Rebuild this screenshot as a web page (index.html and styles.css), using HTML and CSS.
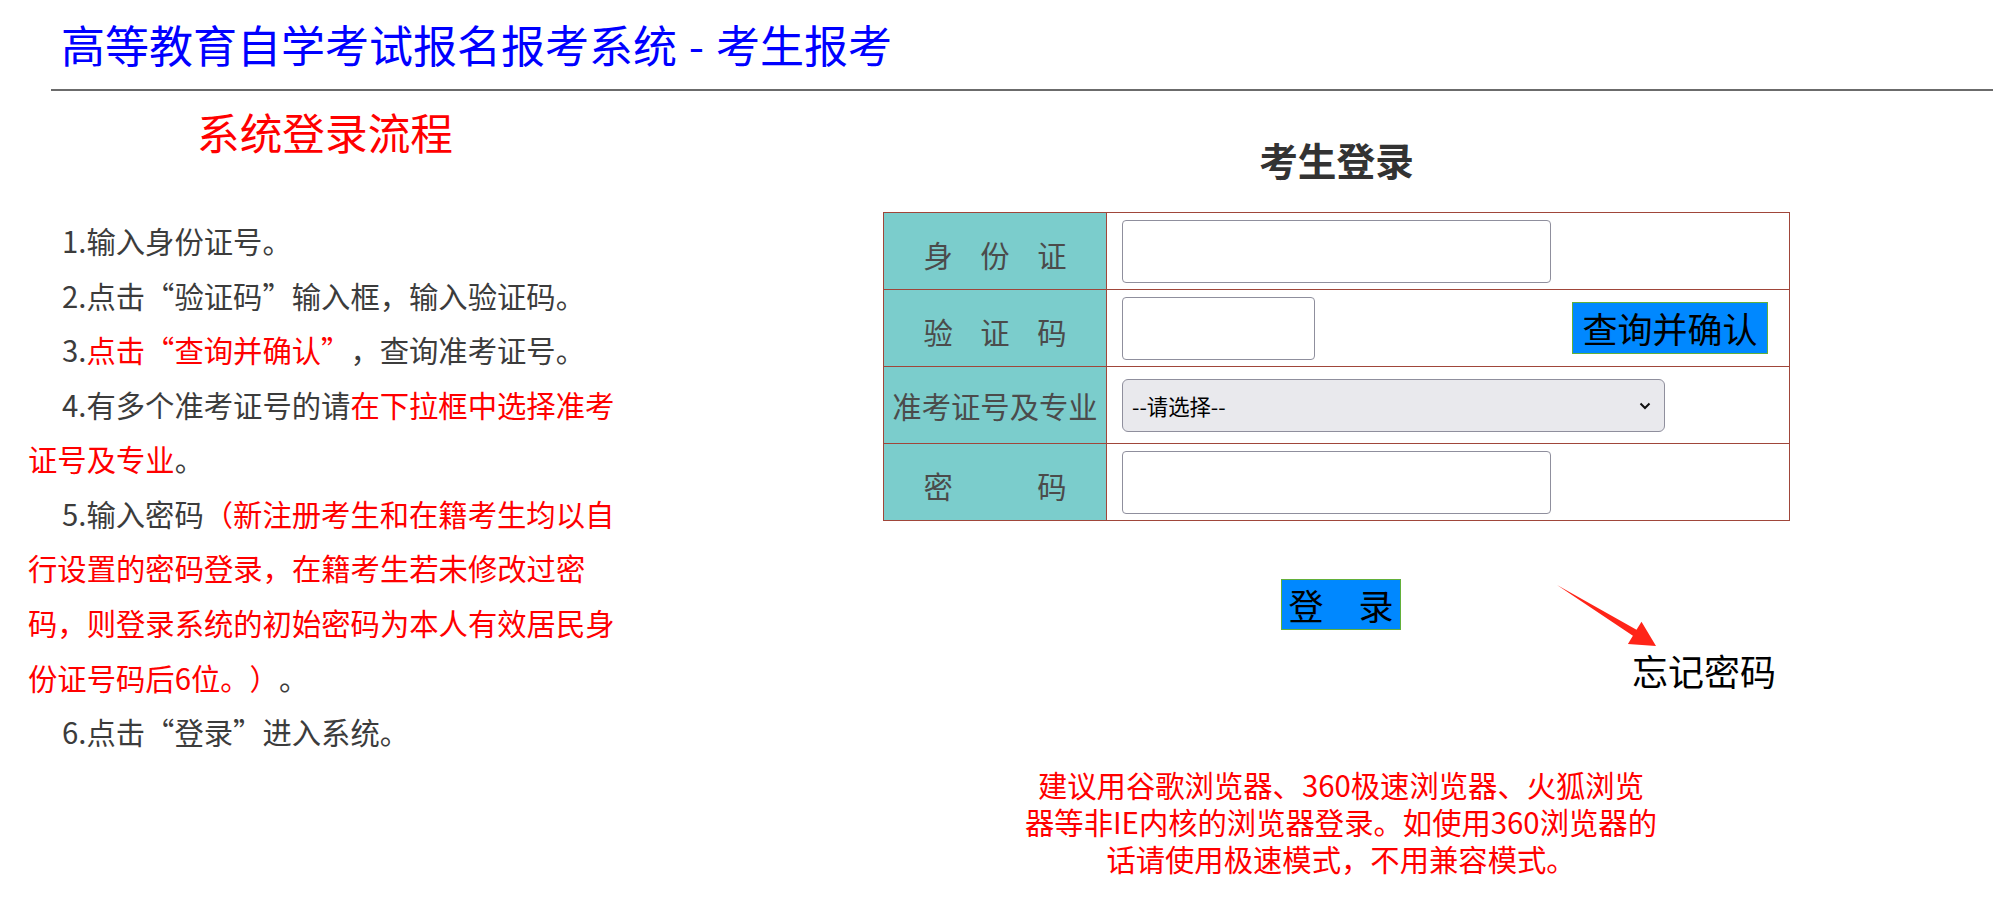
FILE: index.html
```html
<!DOCTYPE html>
<html lang="zh-CN">
<head>
<meta charset="utf-8">
<title>高等教育自学考试报名报考系统 - 考生报考</title>
<link rel="stylesheet" href="styles.css">
</head>
<body>
<header class="top">
  <h1 class="site-title">高等教育自学考试报名报考系统 - 考生报考</h1>
</header>
<hr class="rule">
<main class="layout">
  <section class="guide">
    <h2 class="guide-title">系统登录流程</h2>
    <div class="steps">
      <p>1.输入身份证号。</p>
      <p>2.点击“验证码”输入框，输入验证码。</p>
      <p>3.<span class="hl">点击“查询并确认”</span>，查询准考证号。</p>
      <p>4.有多个准考证号的请<span class="hl">在下拉框中选择准考</span><span class="hl">证号及专业</span>。</p>
      <p>5.输入密码<span class="hl">（新注册考生和在籍考生均以自</span><span class="hl">行设置的密码登录，在籍考生若未修改过密</span><span class="hl">码，则登录系统的初始密码为本人有效居民身</span><span class="hl">份证号码后6位。）</span>。</p>
      <p>6.点击“登录”进入系统。</p>
    </div>
  </section>

  <section class="login">
    <h2 class="login-title">考生登录</h2>
    <table class="login-table">
      <tr>
        <th class="label"><span class="spread"><span>身</span><span>份</span><span>证</span></span></th>
        <td class="field"><input class="text-input wide" type="text"></td>
      </tr>
      <tr>
        <th class="label"><span class="spread"><span>验</span><span>证</span><span>码</span></span></th>
        <td class="field">
          <div class="field-row">
            <input class="text-input short" type="text">
            <button class="btn btn-query" type="button">查询并确认</button>
          </div>
        </td>
      </tr>
      <tr>
        <th class="label">准考证号及专业</th>
        <td class="field">
          <span class="select-wrap">
            <select class="select">
              <option>--请选择--</option>
            </select>
            <svg class="chevron" width="12" height="8" viewBox="0 0 12 8"><path d="M1.5 1.5 L6 6 L10.5 1.5" fill="none" stroke="#111" stroke-width="2"/></svg>
          </span>
        </td>
      </tr>
      <tr>
        <th class="label"><span class="spread"><span>密</span><span>码</span></span></th>
        <td class="field"><input class="text-input wide" type="password"></td>
      </tr>
    </table>

    <div class="actions">
      <button class="btn btn-login" type="button">登　录</button>
      <svg class="arrow" width="101" height="63" viewBox="0 0 101 63">
        <polygon points="1,1 80.5,45.8 85.5,37.7 100,62 71.9,59.9 76.9,51.8" fill="#ff2418"/>
      </svg>
      <div class="forgot-row"><a class="forgot" href="#">忘记密码</a></div>
    </div>

    <p class="tip">建议用谷歌浏览器、360极速浏览器、火狐浏览<br>器等非IE内核的浏览器登录。如使用360浏览器的<br>话请使用极速模式，不用兼容模式。</p>
  </section>
</main>
</body>
</html>
```

FILE: styles.css
```css
body {
  margin: 0;
  background: #fff;
  color: #3c3c3c;
  font-family: "Noto Sans CJK SC", "Noto Sans", sans-serif;
  text-spacing-trim: space-all;
}

/* page header */
.top {
  padding: 19px 0 0 61px;
}

.site-title {
  margin: 0;
  font-size: 44px;
  line-height: 50px;
  font-weight: normal;
  color: #0000ff;
  word-spacing: 2px;
}

.rule {
  margin: 20px 0 0 51px;
  height: 0;
  border: 0;
  border-top: 2px solid #6b6b6b;
}

.layout {
  display: flex;
}

/* left column: login steps */
.guide {
  flex: none;
  width: 650px;
}

.guide-title {
  margin: 16px 0 0;
  font-size: 42.67px;
  line-height: 50px;
  font-weight: normal;
  color: #ff0000;
  text-align: center;
}

.steps {
  margin: 56px 0 0 28px;
  width: 590px;
  font-size: 29.33px;
  line-height: 54.56px;
}

.steps p {
  margin: 0;
  text-indent: 34px;
}

.hl {
  color: #ff0000;
}

/* right column: login form */
.login {
  flex: 1;
  padding-left: 30px;
  display: flex;
  flex-direction: column;
  align-items: center;
}

.login-title {
  margin: 45px 0 30px;
  font-size: 38.67px;
  line-height: 46px;
  font-weight: bold;
  color: #333;
}

.login-table {
  width: 907px;
  border-collapse: collapse;
  border: 1px solid #a0463a;
}

.login-table th,
.login-table td {
  border: 1px solid #a0463a;
  height: 76px;
  padding: 0;
}

.label {
  width: 222px;
  background: #7bcdcc;
  color: #4b4b4b;
  font-size: 29.33px;
  font-weight: normal;
  text-align: center;
  white-space: nowrap;
}

.spread {
  display: inline-flex;
  justify-content: space-between;
  width: 143px;
  vertical-align: middle;
}

.field {
  padding-left: 15px !important;
  text-align: left;
}

.field-row {
  display: flex;
  align-items: center;
  padding-right: 21px;
}

.text-input {
  box-sizing: border-box;
  height: 63px;
  border: 1px solid #8f8f9d;
  border-radius: 4px;
  background: #fff;
  vertical-align: middle;
}

.text-input.wide {
  width: 429px;
}

.text-input.short {
  width: 193px;
}

.btn {
  box-sizing: border-box;
  padding: 0;
  background: #0088ff;
  border: 1px solid #63b03a;
  color: #000;
  font-family: "Noto Sans CJK SC", sans-serif;
  font-size: 35px;
  cursor: pointer;
}

.btn-query {
  margin-left: auto;
  width: 196px;
  height: 52px;
  line-height: 50px;
}

.select-wrap {
  position: relative;
  display: inline-block;
  vertical-align: middle;
}

.select {
  box-sizing: border-box;
  width: 543px;
  height: 53px;
  padding: 0 0 0 9px;
  border: 1px solid #8f8f9d;
  border-radius: 6px;
  background: #e9e9ed;
  color: #000;
  font-family: "Noto Sans CJK SC", sans-serif;
  font-size: 21.33px;
  appearance: none;
  -webkit-appearance: none;
  display: block;
}

.chevron {
  position: absolute;
  right: 14px;
  top: 23px;
  pointer-events: none;
}

/* login button, arrow and forgot-password link */
.actions {
  position: relative;
  align-self: stretch;
  margin-top: 58px;
  display: flex;
  flex-direction: column;
  align-items: center;
}

.btn-login {
  margin-left: 9px;
  width: 120px;
  height: 51px;
  line-height: 49px;
}

.arrow {
  position: absolute;
  left: 876px;
  top: 5px;
}

.forgot-row {
  align-self: stretch;
  margin-top: 19px;
  padding-left: 952px;
  line-height: 42px;
}

.forgot {
  font-size: 36px;
  color: #000;
  text-decoration: none;
}

.tip {
  margin: 66px 0 0 9px;
  font-size: 29.33px;
  line-height: 37px;
  color: #ff0000;
  text-align: center;
  white-space: nowrap;
}
```
